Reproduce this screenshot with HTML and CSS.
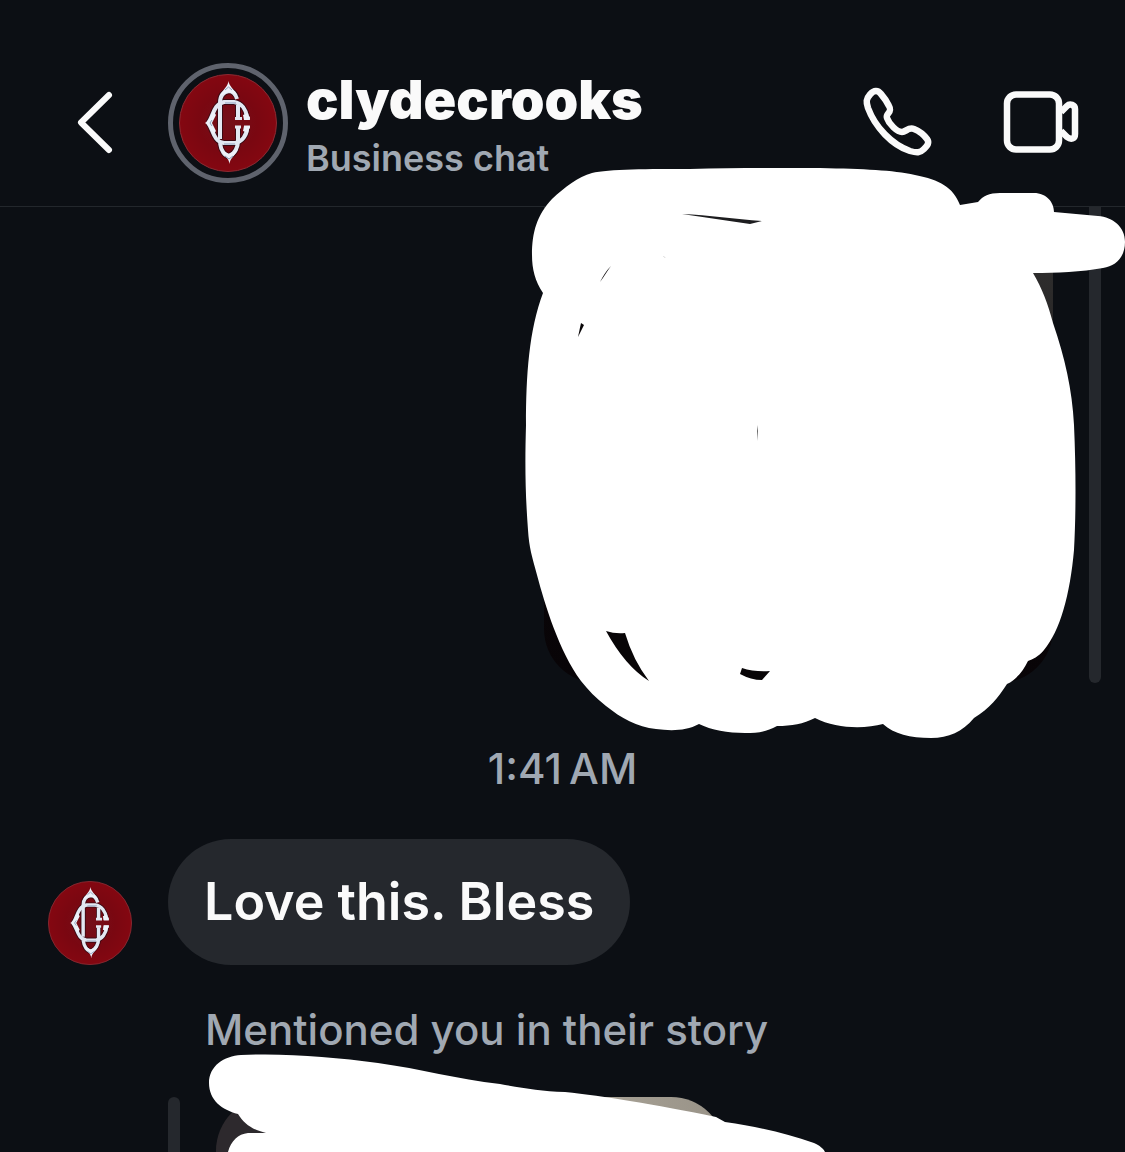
FILE: index.html
```html
<!DOCTYPE html>
<html lang="en">
<head>
  <meta charset="UTF-8" />
  <meta name="viewport" content="width=device-width, initial-scale=1" />
  <title>clydecrooks</title>
  <link rel="stylesheet" href="styles.css">
</head>
<body>
  <svg class="symbols" aria-hidden="true">
    <defs>
      <radialGradient id="red">
        <stop offset="0" stop-color="#74101a" />
        <stop offset="0.6" stop-color="#7a0711" />
        <stop offset="1" stop-color="#840711" />
      </radialGradient>
    </defs>
    <symbol id="logo" viewBox="19 19 98 98">
      <circle cx="68" cy="68" r="48.5" fill="url(#red)" stroke="#8b2b33" stroke-width="1" />
      <g fill="none" stroke="#3c0a14" stroke-width="6">
        <path d="M77 43C75 37 72 36 69 36C62 37 60 42 60 48V84M60 88C61 96 65 101 69 101C75 99 78 92 78 86V73M48 68C53 63 53 49 64 47H74C82 48 86 55 87 62M48 68C53 73 53 87 64 88H75C82 87 87 80 87 73M78 50V64" />
      </g>
      <g fill="none" stroke="#e2e8f2" stroke-width="4" stroke-linejoin="round">
        <path d="M77 44C75 37 72 36 69 36C62 37 60 42 60 48V84" />
        <path d="M60 88C61 96 65 101 69 101C75 99 78 92 78 86V73" />
        <path d="M48 68C53 63 53 49 64 47H74C82 48 86 55 87 62" />
        <path d="M48 68C53 73 53 87 64 88H75C82 87 87 80 87 73" />
        <path d="M78 50V64" />
        <path d="M75 63.5H82M84 63H90M75 72H81M84 72H90" stroke-width="3" />
      </g>
      <g fill="#edf2fa">
        <path d="M68.5 26C69 31 74 34 77 40L68.500 37L60 41C62 35 68 32 68.500 26Z" />
        <path d="M69.5 109C69 103 64 101 60 94L69 99L78 94C75 101 70 103 69.500 109Z" />
        <path d="M45 68C49 66 51 61 53 55L56 60L52 68L56 76L53 80C51 75 49 70 45 68Z" />
        <path d="M83 60L88 58L90 65H84ZM84 71H90L88 78L83 76Z" />
      </g>
      <path d="M65 35L68.500 32L72 35M65 101L69 104L73 101M65 48H76M64 89H75M50 68L52 65M50 68L52 71" fill="none" stroke="#8fa1bd" stroke-width="1" />
    </symbol>
  </svg>

  <div class="app">
    <header class="header">
      <button class="icon-btn back-btn" aria-label="Back">
        <svg width="40" height="70" viewBox="75 88 40 70" fill="none" stroke="#fafafa" stroke-width="6" stroke-linecap="round" stroke-linejoin="round">
          <path d="M109 95L81 122.500L109 150" />
        </svg>
      </button>
      <a class="profile" href="#">
        <span class="ring"><svg class="logo" role="img" aria-label="clydecrooks"><use href="#logo" /></svg></span>
        <span class="names">
          <span class="username">clydecrooks</span>
          <span class="subtitle">Business chat</span>
        </span>
      </a>
      <div class="actions">
        <button class="icon-btn" aria-label="Audio call">
          <svg width="72" height="72" viewBox="861 87 72 72" fill="none" stroke="#fafafa" stroke-width="6.5" stroke-linejoin="round">
            <path d="M870 94.500C874 90 878 90 881 94C884.500 98 887 102 889 106C893 113 885 113 887 118C889 124 897 132 902 132C906 132 908 127 914 129C919 131 924 135 927 139C930 143 927 146 924 149C920 153 917 153 910 151C892 145 875 127 868 108C866 102 866 99 870 94.500Z" />
          </svg>
        </button>
        <button class="icon-btn" aria-label="Video call">
          <svg width="76" height="64" viewBox="1003 91 76 64" fill="none" stroke="#fafafa" stroke-width="6.5" stroke-linejoin="round">
            <rect x="1007" y="94.500" width="52" height="55" rx="9" />
            <path d="M1061 112L1067 106C1070 103 1075 105 1075 109V134C1075 139 1071 140 1067 137L1061 131" />
          </svg>
        </button>
      </div>
    </header>

    <main class="thread">
      <section class="sent">
        <div class="photo sent-photo">
          <svg class="doodle sent-doodle" width="605" height="590" viewBox="520 160 605 590" aria-hidden="true">
            <path fill="#fff" d="M532 255C532 232 537 215 552 199C565 187 578 177 592 173C608 169 650 169 690 169C735 168 780 168 820 168C865 169 892 170 915 175C940 180 953 187 960 205L978 202C983 196 989 193 1000 193H1032C1046 192 1054 202 1054 212L1098 216C1113 217 1125 227 1125 242C1125 257 1116 266 1103 268C1082 272 1056 273 1033 273C1042 288 1048 304 1053 323C1065 358 1072 389 1074 425C1076 470 1076 515 1074 550C1070 595 1060 631 1044 650C1038 657 1033 659 1028 661C1023 671 1017 679 1007 684C998 698 990 708 974 718C962 732 949 738 931 738C910 738 894 734 883 724C865 729 836 729 815 718C803 724 792 726 777 726C766 732 758 733 745 733C728 733 711 730 699 724C686 731 671 731 656 729C637 727 621 718 606 706C596 698 588 690 581 681C559 651 545 605 537 575C532 557 529 547 528 530C525 490 525 460 526 425C526 375 529 330 543 293C535 281 532 269 532 255Z" />
            <g fill="#080507">
              <path d="M682 214C709 215 735 219 762 221L750 224C727 221 705 217 682 214Z" fill="#1d1d1f" />
              <path d="M600 282C603 276 606 271 611 266C607 271 604 277 600 282Z" />
              <path d="M581 323L584 325L578 337Z" />
              <path d="M606 631Q615 634 625 633Q633 660 649 681Q625 666 606 631Z" />
              <path d="M742 668Q754 672 770 671L762 680Q751 680 740 674Z" />
              <path d="M757 425L758 431L757 441ZM663 256L666 258L664 257Z" fill="#666" />
            </g>
          </svg>
        </div>
        <div class="bar"></div>
      </section>

      <time class="time">1:41&#8239;AM</time>

      <section class="received">
        <svg class="logo sender" role="img" aria-label="clydecrooks"><use href="#logo" /></svg>
        <p class="bubble">Love this. Bless</p>
      </section>

      <section class="story">
        <p class="caption">Mentioned you in their story</p>
        <div class="story-row">
          <div class="bar"></div>
          <div class="photo story-photo">
            <svg class="doodle story-doodle" width="640" height="120" viewBox="200 1040 640 120" aria-hidden="true">
              <path fill="#fff" d="M227 1160L228 1152C231 1141 238 1134 248 1133H266C253 1130 244 1124 238 1114C222 1110 209 1100 209 1083C209 1066 224 1056 241 1055C286 1053 333 1057 378 1063C421 1069 457 1079 500 1084C523 1088 540 1091 565 1092C604 1096 653 1104 716 1117L725 1122C759 1127 786 1133 814 1143C820 1146 823 1148 825 1152L828 1160Z" />
            </svg>
          </div>
        </div>
      </section>
    </main>
  </div>
</body>
</html>
```

FILE: styles.css
```css
* {
  box-sizing: border-box;
}
body {
  margin: 0;
  background: #0c0f14;
  color: #fafafa;
  font-family: Inter, sans-serif;
}
.symbols {
  position: absolute;
  width: 0;
  height: 0;
}
.app {
  height: 100vh;
  overflow: hidden;
}

/* header */
.header {
  display: flex;
  align-items: center;
  padding: 63px 46px 23px 75px;
  border-bottom: 1px solid #23272c;
}
.icon-btn {
  display: flex;
  padding: 0;
  border: none;
  background: none;
  cursor: pointer;
}
.profile {
  display: flex;
  align-items: center;
  gap: 18px;
  margin-left: 53px;
  color: inherit;
  text-decoration: none;
}
.ring {
  display: flex;
  align-items: center;
  justify-content: center;
  width: 120px;
  height: 120px;
  border: 5px solid #5f636d;
  border-radius: 50%;
}
.logo {
  display: block;
  width: 98px;
  height: 98px;
}
.names {
  display: flex;
  flex-direction: column;
  padding-top: 4px;
}
.username {
  font-size: 54px;
  font-weight: 900;
  line-height: 66px;
}
.subtitle {
  color: #a0a8b2;
  font-size: 36px;
  font-weight: 600;
  line-height: 50px;
}
.actions {
  display: flex;
  align-items: center;
  gap: 70px;
  margin-left: auto;
}

/* messages */
.thread {
  display: flex;
  flex-direction: column;
}
.bar {
  width: 12px;
  border-radius: 6px;
  background: #25282d;
}
.photo {
  position: relative;
  width: 509px;
}
.sent {
  display: flex;
  justify-content: flex-end;
  gap: 36px;
  height: 476px;
  padding-right: 24px;
}
.sent .bar {
  border-radius: 0 0 6px 6px;
}
.sent-photo {
  border-radius: 0 0 54px 54px;
  background: linear-gradient(#333, #292727 120px, #0a0608 300px, #080407);
}
.doodle {
  position: absolute;
}
.sent-doodle {
  top: -47px;
  right: -72px;
}
.time,
.caption {
  color: #a0a8b2;
  font-size: 42px;
  font-weight: 500;
  line-height: 52px;
}
.time {
  padding: 60px 0 44px;
  text-align: center;
}
.received {
  display: flex;
  align-items: flex-end;
  gap: 36px;
  padding-left: 48px;
}
.sender {
  width: 84px;
  height: 84px;
}
.bubble {
  margin: 0;
  padding: 30px 36px;
  border-radius: 63px;
  background: #25282d;
  font-size: 52px;
  font-weight: 600;
  line-height: 66px;
}
.story {
  padding: 39px 0 0 168px;
}
.caption {
  margin: 0;
  padding: 0 0 41px 37px;
}
.story-row {
  display: flex;
  gap: 36px;
  height: 900px;
}
.story-photo {
  border-radius: 54px;
  background: linear-gradient(90deg, #2d292d 120px, #aaa498 360px, #989287);
}
.story-doodle {
  top: -57px;
  left: -16px;
}
```
